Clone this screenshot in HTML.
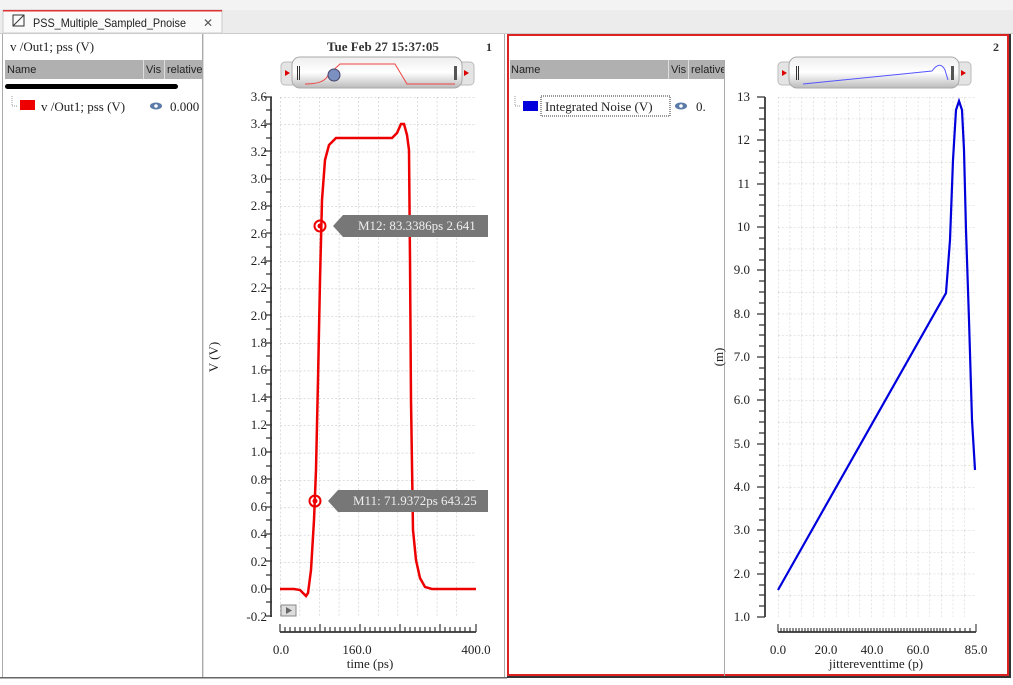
<!DOCTYPE html>
<html><head><meta charset="utf-8"><style>
body{margin:0;width:1013px;height:685px;overflow:hidden;background:#fff;font-family:"Liberation Serif",serif}
svg{display:block}
.s{font-family:"Liberation Sans",sans-serif}
</style></head><body>
<svg width="1013" height="685" viewBox="0 0 1013 685" xmlns="http://www.w3.org/2000/svg">
<defs>
<pattern id="gl" width="19.6" height="27.37" patternUnits="userSpaceOnUse" x="280" y="97">
<path d="M0 0H19.6M0 0V27.37" stroke="#bbb" stroke-width="1" stroke-dasharray="2 2" fill="none"/>
</pattern>
<pattern id="gr" width="11.65" height="21.67" patternUnits="userSpaceOnUse" x="778" y="97">
<path d="M0 0H11.65M0 0V21.67" stroke="#ccc" stroke-width="1" stroke-dasharray="2 2" fill="none"/>
</pattern>
<linearGradient id="sl" x1="0" y1="0" x2="0" y2="1"><stop offset="0" stop-color="#eee"/><stop offset=".5" stop-color="#fff"/><stop offset="1" stop-color="#bbb"/></linearGradient>
<clipPath id="c1"><rect x="5" y="60" width="198" height="19"/></clipPath>
<clipPath id="c2"><rect x="510" y="60" width="214" height="19"/></clipPath>
</defs>
<rect x="0" y="0" width="1013" height="33" fill="#f3f3f3"/>
<rect x="0" y="10" width="1013" height="23" fill="#ececec"/>
<rect x="3" y="10" width="219" height="23" fill="#fafafa" stroke="#ccc"/>
<rect x="3" y="10" width="219" height="1.5" fill="#d33"/>
<rect x="13" y="15" width="11" height="11" fill="none" stroke="#333"/><path d="M13 26L24 15" stroke="#333"/>
<text x="33" y="27" class="s" font-size="12" fill="#222" textLength="153" lengthAdjust="spacingAndGlyphs">PSS_Multiple_Sampled_Pnoise</text>
<text x="203" y="27" class="s" font-size="12" fill="#555">✕</text>
<rect x="0" y="33" width="1013" height="1" fill="#ccc"/>
<rect x="2" y="34" width="1" height="643" fill="#aaa"/>
<text x="10" y="51" font-size="13" fill="#222">v /Out1; pss (V)</text>
<rect x="5" y="60" width="198" height="19" fill="#b0b0b0"/>
<rect x="143" y="60" width="1" height="19" fill="#ddd"/><rect x="164" y="60" width="1" height="19" fill="#ddd"/>
<g clip-path="url(#c1)">
<text x="7" y="73" class="s" font-size="11" fill="#222">Name</text>
<text x="146" y="73" class="s" font-size="11" fill="#222">Vis</text>
<text x="167" y="73" class="s" font-size="11" fill="#222">relative</text>
</g>
<rect x="5" y="84" width="173" height="5" rx="2.5" fill="#000"/>
<path d="M12 96V106H18" stroke="#999" stroke-dasharray="1 1" fill="none"/>
<rect x="20" y="100" width="15" height="10" fill="#e00"/>
<text x="41" y="111" font-size="13" fill="#222">v /Out1; pss (V)</text>
<ellipse cx="156" cy="106" rx="6" ry="3.5" fill="#5a7aa8"/><circle cx="156" cy="106" r="1.8" fill="#fff"/>
<text x="170" y="111" font-size="13" fill="#222">0.000</text>
<rect x="202" y="34" width="1" height="643" fill="#aaa"/>
<rect x="203" y="34" width="1" height="643" fill="#ddd"/>
<text x="327" y="51" font-size="13" font-weight="bold" fill="#333">Tue Feb 27 15:37:05</text>
<text x="486" y="51" font-size="12" font-weight="bold" fill="#333">1</text>
<rect x="281" y="62" width="193" height="23" rx="4" fill="#e4e4e4" stroke="#bbb"/>
<rect x="292" y="57" width="170" height="31" rx="8" fill="url(#sl)" stroke="#aaa"/>
<path d="M290 73l-5-3v6z M464 70l5 3-5 3z" fill="#d00"/>
<rect x="297" y="66" width="1" height="14" fill="#333"/><rect x="299" y="66" width="1" height="14" fill="#333"/>
<rect x="454" y="66" width="3" height="14" fill="#555"/>
<path d="M305 84Q325 84 328 75L340 64H395L407 84H455" stroke="#e44" fill="none"/>
<circle cx="334" cy="75" r="6" fill="#7b8fc0" stroke="#446"/>
<rect x="280" y="97" width="196" height="520" fill="url(#gl)"/>
<g font-size="13" fill="#222" text-anchor="end">
<text x="267" y="101">3.6</text><text x="267" y="128">3.4</text><text x="267" y="156">3.2</text><text x="267" y="183">3.0</text><text x="267" y="210">2.8</text><text x="267" y="238">2.6</text><text x="267" y="265">2.4</text><text x="267" y="292">2.2</text><text x="267" y="320">2.0</text><text x="267" y="347">1.8</text><text x="267" y="374">1.6</text><text x="267" y="402">1.4</text><text x="267" y="429">1.2</text><text x="267" y="456">1.0</text><text x="267" y="484">0.8</text><text x="267" y="511">0.6</text><text x="267" y="538">0.4</text><text x="267" y="566">0.2</text><text x="267" y="593">0.0</text><text x="267" y="621">-0.2</text>
</g>
<path d="M271 97V617" stroke="#111" stroke-width="1.5"/>
<path d="M264 97H272M266 110H272M266 124H272M266 138H272M264 151H272M266 165H272M266 179H272M266 192H272M266 206H272M266 220H272M266 233H272M266 247H272M266 261H272M266 274H272M266 288H272M266 302H272M266 315H272M266 329H272M266 343H272M266 356H272M266 370H272M266 384H272M266 397H272M266 411H272M266 425H272M266 438H272M266 452H272M266 466H272M266 479H272M266 493H272M266 507H272M266 520H272M266 534H272M266 548H272M266 561H272M266 575H272M266 589H272M266 602H272M266 616H272" stroke="#333" stroke-width="1.2"/>
<path d="M280 632H476" stroke="#111" stroke-width="1.5"/>
<path d="M280 624V632M285 627V632M290 627V632M295 627V632M300 627V632M305 627V632M310 627V632M315 627V632M320 624V632M325 627V632M330 627V632M335 627V632M340 627V632M345 627V632M350 627V632M355 627V632M360 624V632M365 627V632M370 627V632M375 627V632M380 627V632M385 627V632M390 627V632M395 627V632M400 624V632M405 627V632M410 627V632M415 627V632M420 627V632M425 627V632M430 627V632M435 627V632M440 624V632M445 627V632M450 627V632M455 627V632M460 627V632M465 627V632M470 627V632M476 624V632" stroke="#333" stroke-width="1.2"/>
<g font-size="13" fill="#222" text-anchor="middle"><text x="281" y="654">0.0</text><text x="357" y="654">160.0</text><text x="476" y="654">400.0</text><text x="370" y="668">time (ps)</text></g>
<text transform="translate(218 357) rotate(-90)" font-size="13" fill="#222" text-anchor="middle">V (V)</text>
<path d="M280 589H294L300 590L306 596L308 593L311 570L314 520L316 470L318 380L320 280L322 200L325 160L329 145L336 138H392L397 133L401 124L404 124L407 135L409 150L410 260L411 400L413 530L416 560L420 578L425 587L432 589H476" stroke="#e00" stroke-width="2.5" fill="none"/>
<rect x="281" y="605" width="15" height="11" fill="#ddd" stroke="#888"/><path d="M286 607l6 3.5-6 3.5z" fill="#666"/>
<path d="M333 226L343 215H488V237H343Z" fill="#777"/>
<text x="358" y="230" font-size="13" fill="#eee">M12: 83.3386ps 2.641</text>
<circle cx="320" cy="226" r="5.5" fill="none" stroke="#e00" stroke-width="2"/><circle cx="320" cy="226" r="2.5" fill="#e00"/>
<path d="M328 501L338 490H488V512H338Z" fill="#777"/>
<text x="353" y="505" font-size="13" fill="#eee">M11: 71.9372ps 643.25</text>
<circle cx="315" cy="501" r="5.5" fill="none" stroke="#e00" stroke-width="2"/><circle cx="315" cy="501" r="2.5" fill="#e00"/>
<rect x="488" y="210" width="16" height="310" fill="#fff"/>
<rect x="504" y="34" width="1" height="643" fill="#aaa"/>
<rect x="508" y="35" width="500" height="640" fill="none" stroke="#d22" stroke-width="2"/>
<rect x="1009" y="34" width="2" height="643" fill="#333"/>
<rect x="507" y="676" width="504" height="2" fill="#333"/>
<rect x="0" y="677" width="507" height="1.5" fill="#666"/>
<text x="993" y="51" font-size="12" font-weight="bold" fill="#333">2</text>
<rect x="510" y="60" width="214" height="19" fill="#b0b0b0"/>
<rect x="668" y="60" width="1" height="19" fill="#ddd"/><rect x="688" y="60" width="1" height="19" fill="#ddd"/>
<g clip-path="url(#c2)">
<text x="511" y="73" class="s" font-size="11" fill="#222">Name</text>
<text x="671" y="73" class="s" font-size="11" fill="#222">Vis</text>
<text x="691" y="73" class="s" font-size="11" fill="#222">relative</text>
</g>
<rect x="724" y="60" width="1" height="616" fill="#aaa"/>
<path d="M515 96V106H521" stroke="#999" stroke-dasharray="1 1" fill="none"/>
<rect x="523" y="101" width="15" height="10" fill="#00d"/>
<rect x="541" y="96" width="129" height="20" fill="none" stroke="#333" stroke-dasharray="1 1"/>
<text x="545" y="111" font-size="13" fill="#222">Integrated Noise (V)</text>
<ellipse cx="681" cy="106" rx="6" ry="3.5" fill="#5a7aa8"/><circle cx="681" cy="106" r="1.8" fill="#fff"/>
<text x="696" y="111" font-size="13" fill="#222">0.</text>
<rect x="778" y="62" width="193" height="23" rx="4" fill="#e4e4e4" stroke="#bbb"/>
<rect x="789" y="57" width="170" height="31" rx="8" fill="url(#sl)" stroke="#aaa"/>
<path d="M787 73l-5-3v6z M961 70l5 3-5 3z" fill="#d00"/>
<rect x="796" y="66" width="1" height="14" fill="#333"/><rect x="798" y="66" width="1" height="14" fill="#333"/>
<rect x="951" y="66" width="3" height="14" fill="#555"/>
<path d="M803 84L932 71Q940 60 945 70L948 80" stroke="#55f" fill="none"/>
<rect x="778" y="97" width="198" height="520" fill="url(#gr)"/>
<g font-size="13" fill="#222" text-anchor="end">
<text x="750" y="101">13</text><text x="750" y="144">12</text><text x="750" y="188">11</text><text x="750" y="231">10</text><text x="750" y="274">9.0</text><text x="750" y="318">8.0</text><text x="750" y="361">7.0</text><text x="750" y="404">6.0</text><text x="750" y="448">5.0</text><text x="750" y="491">4.0</text><text x="750" y="534">3.0</text><text x="750" y="578">2.0</text><text x="750" y="621">1.0</text>
</g>
<path d="M765 97V617" stroke="#111" stroke-width="1.5"/>
<path d="M757 97H765M759 108H765M759 119H765M759 130H765M757 140H765M759 151H765M759 162H765M759 173H765M757 184H765M759 195H765M759 205H765M759 216H765M757 227H765M759 238H765M759 249H765M759 260H765M757 270H765M759 281H765M759 292H765M759 303H765M757 314H765M759 325H765M759 335H765M759 346H765M757 357H765M759 368H765M759 379H765M759 390H765M757 400H765M759 411H765M759 422H765M759 433H765M757 444H765M759 455H765M759 465H765M759 476H765M757 487H765M759 498H765M759 509H765M759 520H765M757 530H765M759 541H765M759 552H765M759 563H765M757 574H765M759 585H765M759 595H765M759 606H765M757 617H765" stroke="#333" stroke-width="1.2"/>
<path d="M778 632H976" stroke="#111" stroke-width="1.5"/>
<path d="M778 624V632M781 628V632M784 628V632M787 628V632M790 628V632M793 628V632M796 628V632M799 628V632M802 628V632M805 628V632M808 628V632M811 628V632M814 628V632M817 628V632M820 628V632M823 628V632M826 628V632M829 628V632M832 628V632M835 628V632M838 628V632M841 628V632M844 628V632M847 628V632M850 628V632M853 628V632M856 628V632M859 628V632M862 628V632M865 628V632M868 628V632M871 628V632M874 628V632M877 628V632M880 628V632M883 628V632M886 628V632M889 628V632M892 628V632M895 628V632M898 628V632M901 628V632M904 628V632M907 628V632M910 628V632M913 628V632M916 628V632M919 628V632M922 628V632M925 628V632M928 628V632M931 628V632M934 628V632M937 628V632M940 628V632M943 628V632M946 628V632M950 628V632M955 628V632M960 628V632M965 628V632M970 628V632M976 624V632" stroke="#333" stroke-width="1.1"/>
<g font-size="13" fill="#222" text-anchor="middle"><text x="778" y="654">0.0</text><text x="826" y="654">20.0</text><text x="872" y="654">40.0</text><text x="918" y="654">60.0</text><text x="976" y="654">85.0</text><text x="876" y="668">jittereventtime (p)</text></g>
<text transform="translate(723 357) rotate(-90)" font-size="13" fill="#222" text-anchor="middle">(m)</text>
<path d="M778 590L946 293L950 240L953 160L956 110L959 101L962 110L964 150L966 230L969 320L972 420L975 470" stroke="#00d" stroke-width="2.2" fill="none"/>
</svg>
</body></html>
